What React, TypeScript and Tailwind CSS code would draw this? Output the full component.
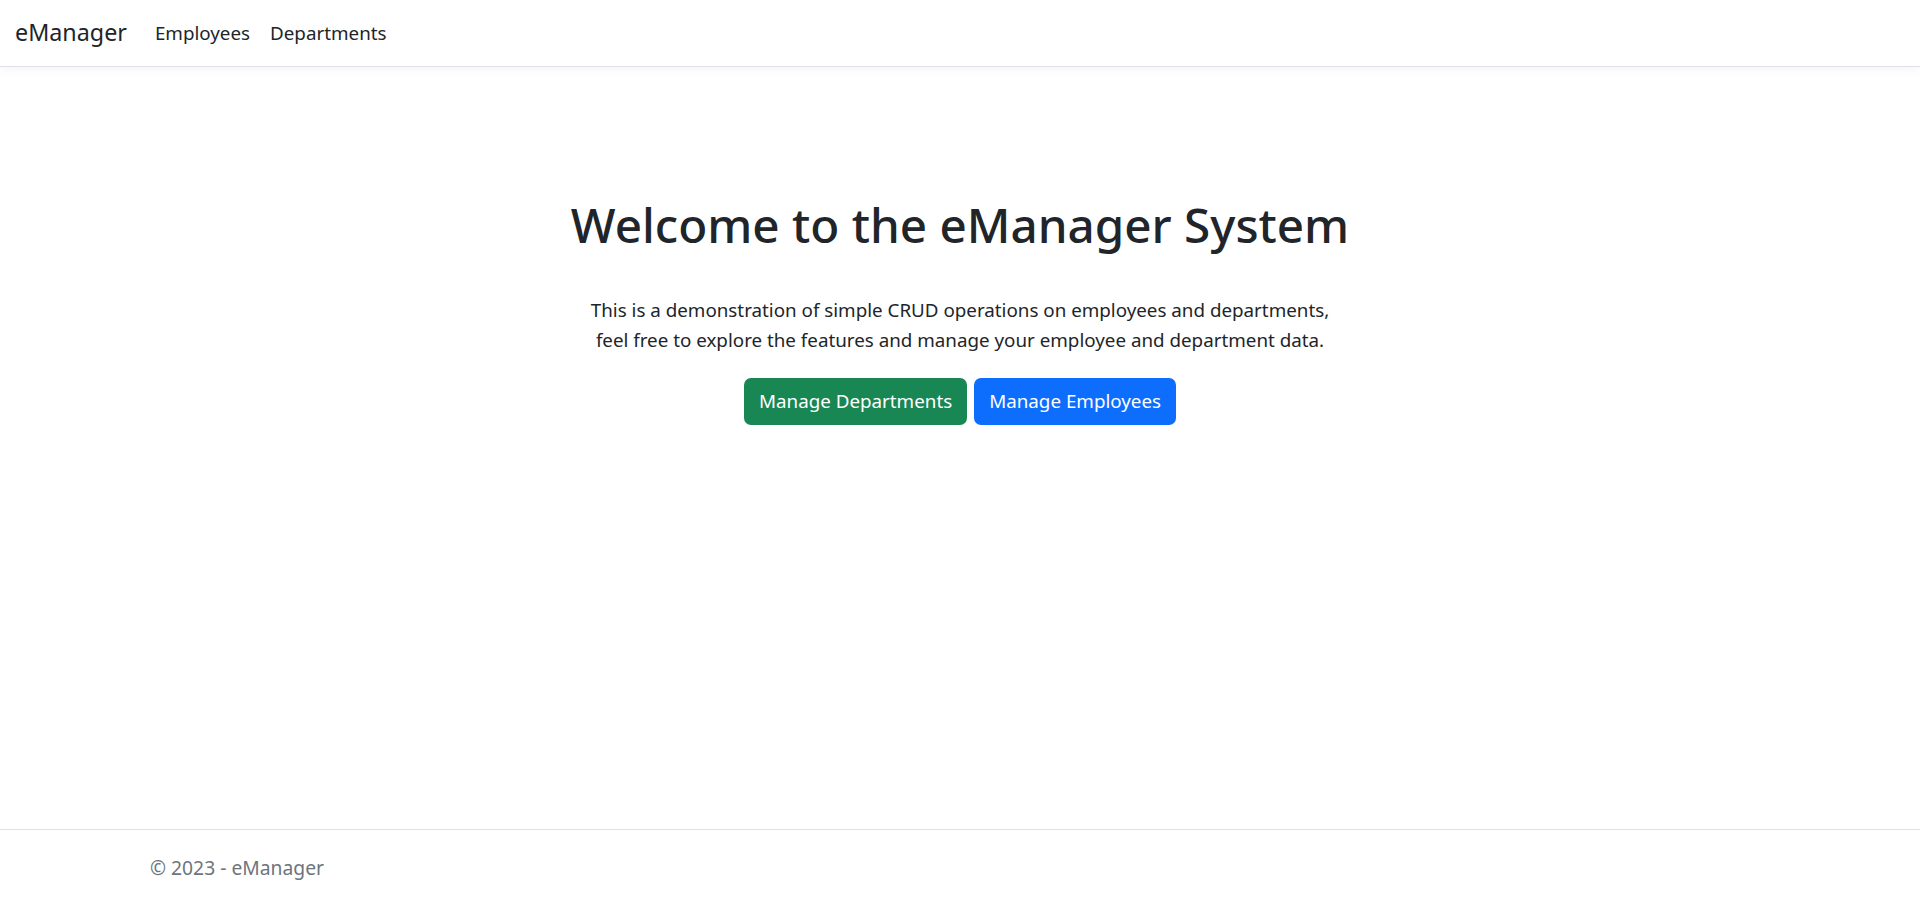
export default function App() {
  return (
    <div className="flex min-h-[897px] flex-col bg-white font-['Noto_Sans',sans-serif] text-[#212529]">
      <header className="h-[67px] border-b border-[#dee2e6] shadow-[0_4px_10px_rgba(0,0,0,0.04)]">
        <nav className="flex h-full items-center px-[15px]">
          <a className="mr-[28px] text-[23.3px] leading-none text-[#212529]">eManager</a>
          <ul className="flex items-center gap-[20px] text-[18.8px] text-[#212529]">
            <li>Employees</li>
            <li>Departments</li>
          </ul>
        </nav>
      </header>

      <main className="flex-1 pt-[128px] text-center">
        <h1 className="text-[47.6px] font-medium leading-[59px]">Welcome to the eManager System</h1>
        <p className="mt-[41px] text-[18.8px] leading-[30px]">
          This is a demonstration of simple CRUD operations on employees and departments,
          <br />
          feel free to explore the features and manage your employee and department data.
        </p>
        <div className="mt-[23px] flex justify-center gap-[7px]">
          <button className="h-[47px] rounded-[7px] bg-[#198754] px-[15px] text-[18.8px] text-white">
            Manage Departments
          </button>
          <button className="h-[47px] rounded-[7px] bg-[#0d6efd] px-[15px] text-[18.8px] text-white">
            Manage Employees
          </button>
        </div>
      </main>

      <footer className="h-[68px] border-t border-[#dee2e6]">
        <div className="mx-auto flex h-full max-w-[1650px] items-center px-[15px] pt-[10px] text-[19.3px] text-[#6c757d]">
          © 2023 - eManager
        </div>
      </footer>
    </div>
  );
}
